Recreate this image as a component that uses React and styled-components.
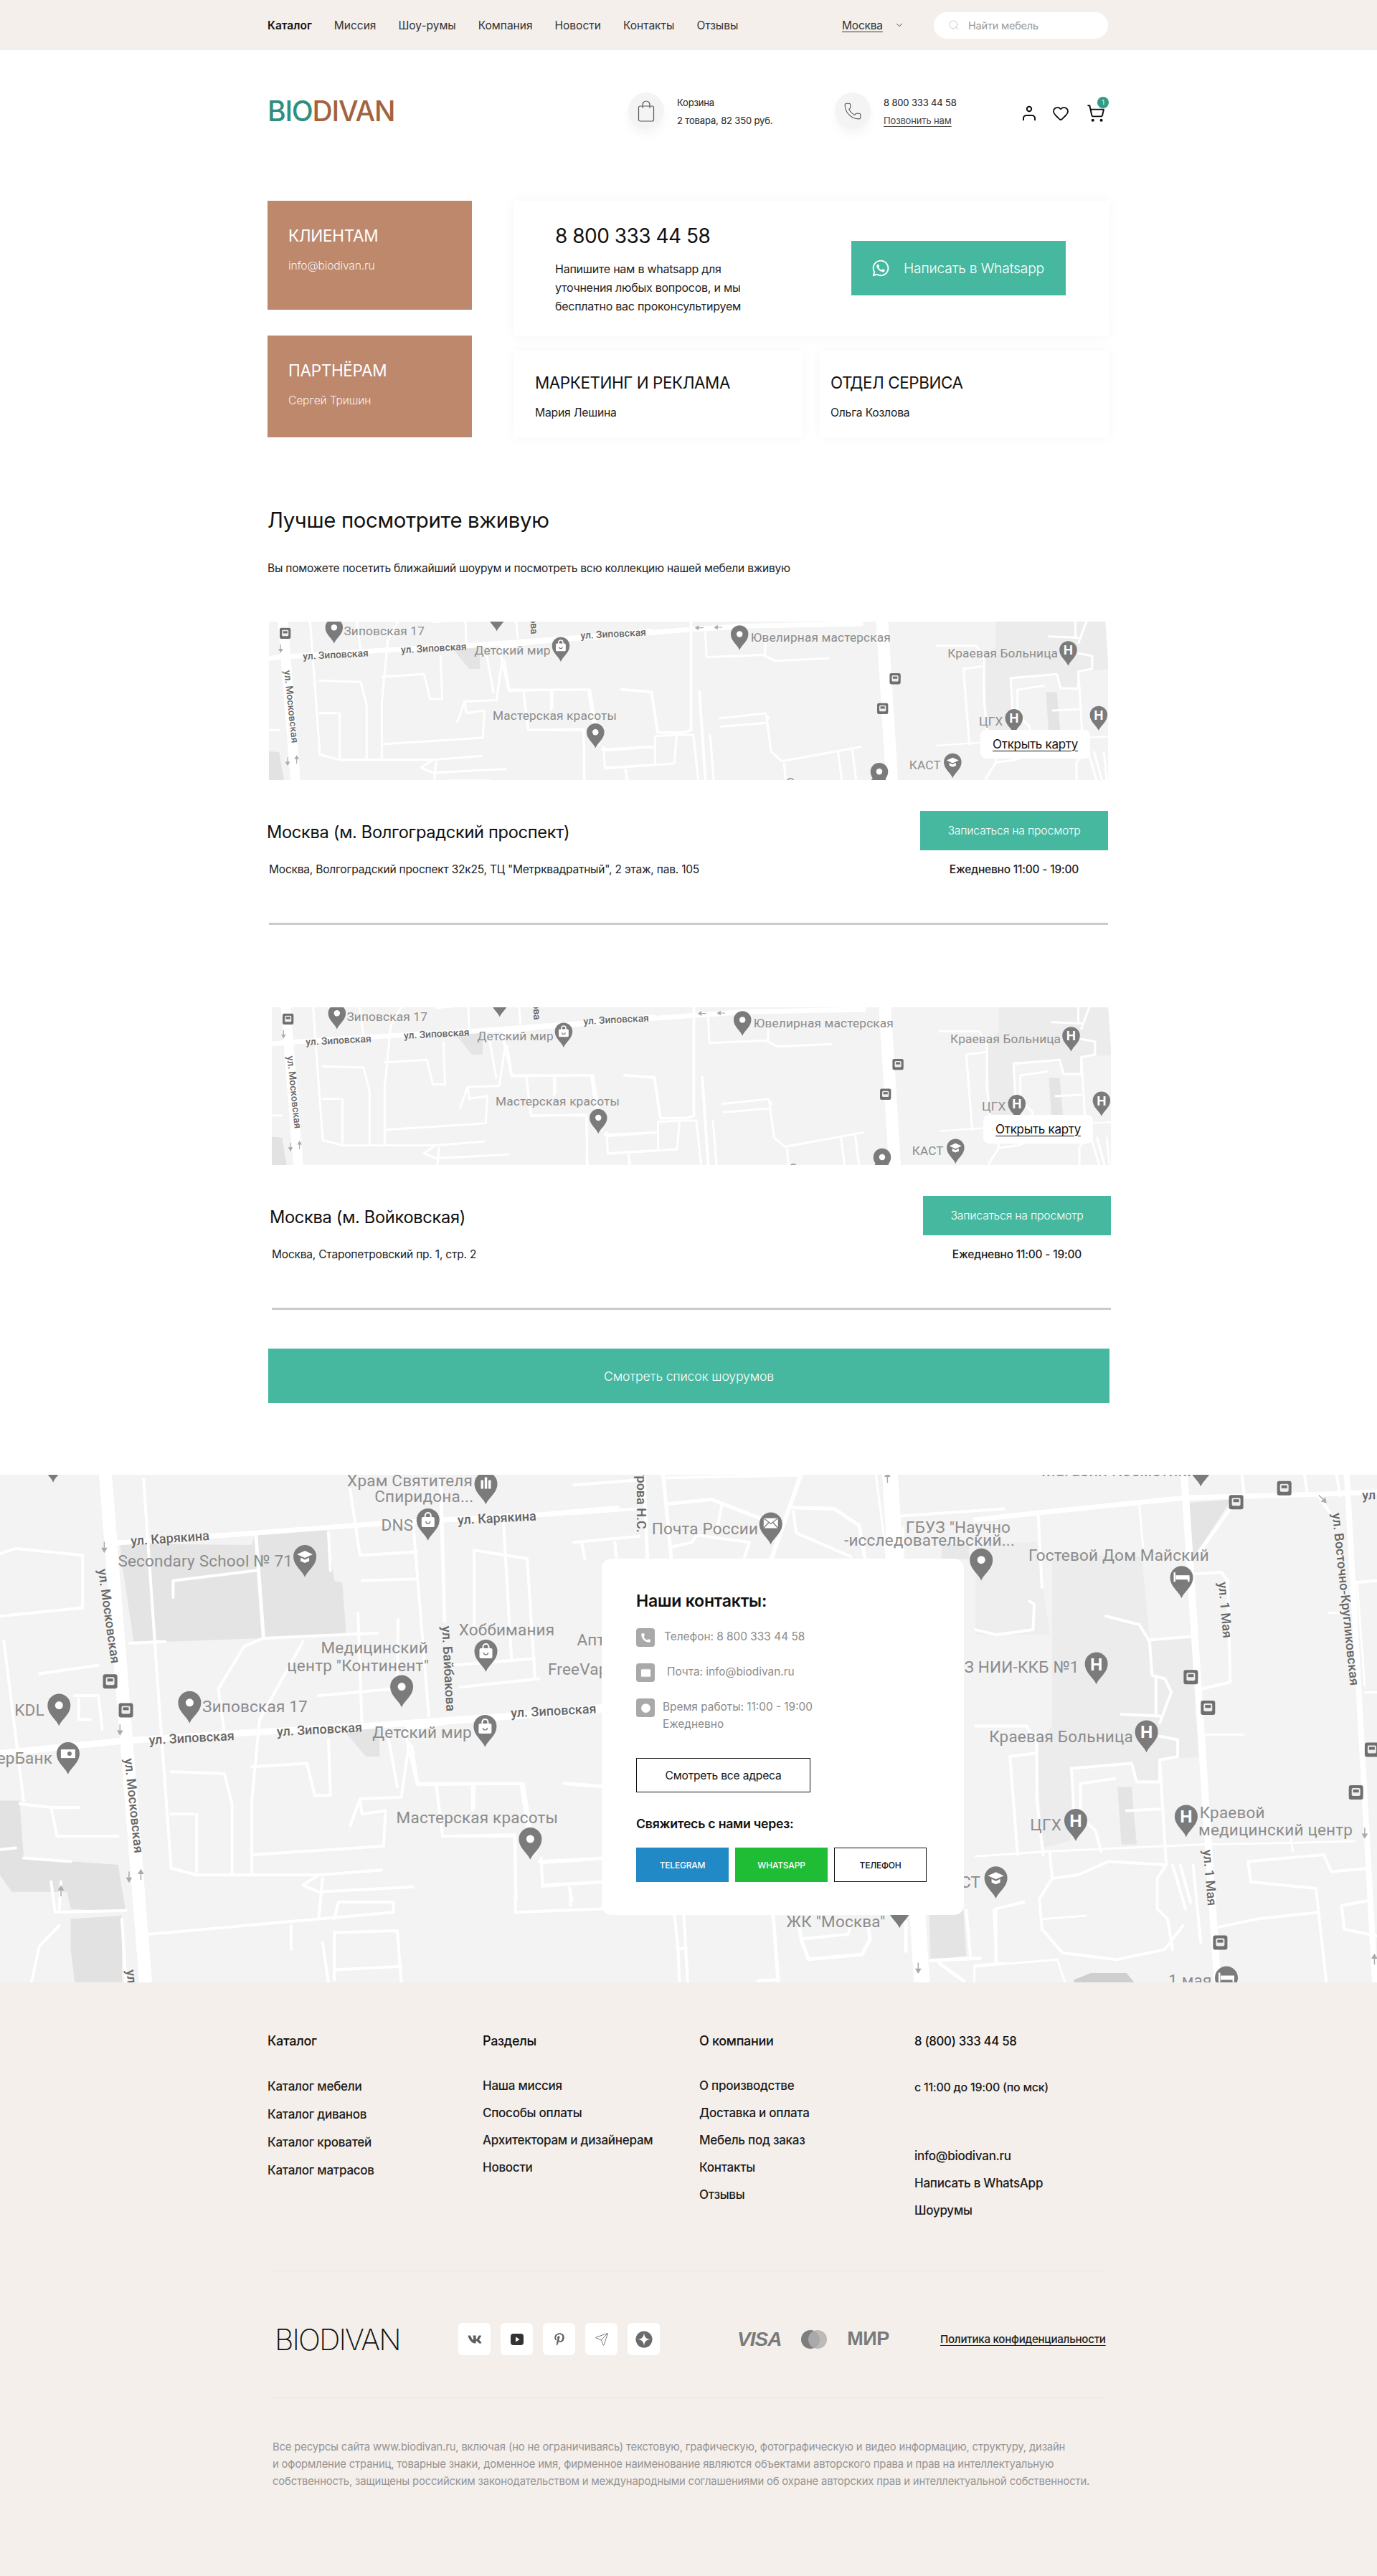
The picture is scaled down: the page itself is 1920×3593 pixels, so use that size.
import React from 'react';
import styled, { createGlobalStyle } from 'styled-components';
import { FaVk, FaWhatsapp, FaPinterestP } from 'react-icons/fa';
import { Search, ChevronDown, Heart, ShoppingCart, Phone, Mail, Clock, Send } from 'lucide-react';

/* ---------- map data: each helper turns measured coordinates into map space (1920x708) ---------- */
const A = (x, y) => [x / 1.823, y / 2.119 - 17.5];
const B = (x, y) => [1360 + x / 2.8, y / 2.119 - 17.5];
const C = (x, y) => [800 + x / 2.613, y / 3 - 2.5];
const D = (x, y) => [800 + x / 2.613, 607.5 + y / 3];
const E = (x, y) => [146 + (700 + x / 3 - 375) / 0.767, 307 + (865 + y / 3 - 867) / 0.767];
const F = (x, y) => [146 + (340 + x / 1.2645 - 375) / 0.767, 307 + (850 + y / 3 - 867) / 0.767];

const line = (fn, pts) => pts.map(([x, y]) => fn(x, y).map((v) => v.toFixed(1)).join(',')).join(' ');

const BLOCKS = [
  ['#e4e4e4', A, [[305,240],[640,245],[650,200],[830,200],[850,350],[870,355],[880,510],[670,520],[430,530],[340,530],[310,300]]],
  ['#e2e2e2', A, [[0,1000],[50,1000],[60,1170],[300,1190],[320,1330],[180,1320],[170,1270],[30,1270],[0,1220]]],
  ['#e2e2e2', A, [[180,1350],[310,1340],[310,1537],[190,1537],[180,1440]]],
  ['#e4e4e4', A, [[880,800],[965,780],[965,870],[930,870]]],
  ['#e4e4e4', B, [[835,120],[1000,110],[870,260],[850,300]]],
  ['#ececec', B, [[300,270],[650,280],[680,520],[850,520],[875,870],[730,880],[710,940],[630,940],[600,890],[380,900],[370,1120],[260,1140],[240,830],[300,780]]],
  ['#e4e4e4', B, [[555,960],[610,960],[630,1130],[570,1130]]],
  ['#eeeeee', B, [[0,240],[240,235],[290,510],[0,510]]],
  ['#cfcfcf', B, [[385,1530],[450,1510],[590,1510],[620,1537],[620,1560],[385,1560]]],
  ['#e4e4e4', D, [[1295,0],[1420,0],[1430,190],[1300,210]]],
  ['#e8e8e8', C, [[1340,300],[1440,300],[1440,360],[1340,360]]],
];

const ROADS = [
  [A, 18, [[268,37],[370,1537]]],
  [A, 9, [[0,860],[300,825],[620,800],[930,780],[1290,750],[1530,725]]],
  [E, 9, [[0,110],[130,90],[780,40],[1000,25],[1500,15]]],
  [A, 7, [[280,240],[640,210],[980,180],[1380,155],[1568,135]]],
  [A, 4, [[0,270],[40,255],[210,275],[210,430],[0,455]]],
  [A, 4, [[365,50],[400,640],[435,1200],[500,1220],[810,1220],[970,1205]]],
  [A, 4, [[440,400],[440,350],[650,320]]],
  [A, 5, [[650,210],[670,520]]],
  [A, 4, [[330,535],[420,530]]],
  [A, 4, [[670,520],[960,505]]],
  [A, 4, [[670,520],[620,545],[555,670],[570,800]]],
  [A, 4, [[770,530],[660,760],[640,1000],[640,1220]]],
  [A, 4, [[910,445],[920,780]]],
  [A, 4, [[1012,465],[1010,640]]],
  [A, 4, [[835,210],[840,320]]],
  [A, 4, [[890,80],[915,275],[1060,265]]],
  [A, 4, [[920,350],[1060,345]]],
  [A, 4, [[1050,180],[1090,750]]],
  [A, 5, [[1120,50],[1130,470]]],
  [A, 4, [[1205,490],[1205,260],[1340,285],[1360,640]]],
  [A, 4, [[1280,180],[1300,580]]],
  [A, 4, [[1170,665],[1370,640]]],
  [A, 4, [[1150,600],[1360,580]]],
  [A, 4, [[810,690],[1000,670]]],
  [A, 4, [[100,625],[250,600]]],
  [A, 4, [[10,530],[60,1000]]],
  [A, 4, [[190,690],[250,690],[260,790]]],
  [A, 4, [[200,700],[200,760],[230,760]]],
  [A, 4, [[50,1010],[130,1020],[145,1105],[300,1105]]],
  [A, 4, [[435,915],[570,920],[590,1010],[590,1220]]],
  [A, 4, [[500,1040],[500,1210]]],
  [A, 4, [[435,1040],[490,1040]]],
  [A, 4, [[640,900],[780,890],[800,985],[840,985],[835,820]]],
  [A, 4, [[640,1160],[975,1135],[980,1030],[920,1040],[915,995],[890,1075]]],
  [A, 4, [[915,995],[1020,990],[1040,830]]],
  [A, 4, [[985,800],[1010,960]]],
  [A, 4, [[1030,800],[1060,950],[1330,950],[1360,1160]]],
  [A, 4, [[1110,960],[1125,1105],[1310,1105],[1310,1330],[1530,1320]]],
  [A, 4, [[1205,960],[1205,1020]]],
  [A, 4, [[1370,1180],[1530,1170]]],
  [A, 4, [[1380,1250],[1530,1240]]],
  [A, 4, [[1450,1260],[1450,1310]]],
  [A, 4, [[810,1220],[770,1250],[810,1270],[1050,1255]]],
  [A, 4, [[820,1230],[810,1350]]],
  [A, 4, [[380,1395],[810,1350],[1000,1330],[1000,1300],[860,1300],[850,1350]]],
  [A, 4, [[740,1370],[740,1440]]],
  [A, 4, [[820,1420],[835,1537]]],
  [A, 4, [[850,1530],[850,1390],[1010,1385],[1020,1537]]],
  [A, 4, [[850,1500],[1020,1490]]],
  [A, 4, [[130,1240],[140,1330],[320,1325]]],
  [A, 4, [[155,1240],[150,1330]]],
  [A, 4, [[150,1370],[100,1430],[80,1537]]],
  [A, 4, [[310,1350],[320,1537]]],
  [A, 4, [[0,1145],[40,1140]]],
  [A, 4, [[130,1020],[200,1020]]],
  [A, 4, [[60,1170],[180,1180]]],
  [C, 22, [[1152,0],[1268,2130]]],
  [C, 6, [[830,0],[720,360]]],
  [C, 4, [[0,50],[230,30]]],
  [C, 4, [[0,170],[230,150]]],
  [C, 4, [[0,290],[240,265]]],
  [C, 4, [[30,295],[40,360]]],
  [C, 4, [[150,290],[155,355]]],
  [C, 5, [[255,0],[268,355]]],
  [C, 5, [[325,0],[355,355]]],
  [C, 4, [[340,20],[820,10]]],
  [C, 5, [[340,130],[500,110],[680,190]]],
  [C, 4, [[540,130],[520,250]]],
  [C, 4, [[355,310],[430,290],[450,260],[640,290],[620,360]]],
  [C, 5, [[800,145],[950,150],[1040,220],[1060,350]]],
  [C, 4, [[800,160],[810,250],[1010,350]]],
  [C, 3, [[1100,0],[1140,355]]],
  [C, 4, [[1190,180],[1568,150]]],
  [C, 3, [[1200,230],[1200,350]]],
  [D, 4, [[365,0],[380,155],[385,300]]],
  [D, 4, [[400,0],[415,300]]],
  [D, 4, [[375,160],[410,160]]],
  [D, 5, [[725,0],[745,300]]],
  [D, 4, [[670,295],[745,290]]],
  [D, 5, [[820,60],[830,125],[855,205],[1050,185],[1080,120],[1070,50]]],
  [D, 4, [[830,120],[1000,100],[1010,60]]],
  [D, 5, [[1210,50],[1210,170]]],
  [D, 5, [[1300,210],[1480,200]]],
  [D, 5, [[1330,220],[1420,295]]],
  [D, 4, [[1430,0],[1445,190]]],
  [D, 3, [[1460,300],[1460,230],[1568,220]]],
  [D, 3, [[1530,0],[1540,220]]],
  [E, 5, [[790,0],[790,460],[760,470],[650,470],[625,300],[500,290]]],
  [E, 4, [[10,170],[30,295],[360,290],[385,460]]],
  [E, 4, [[90,310],[110,460],[340,455]]],
  [E, 4, [[205,300],[205,375]]],
  [E, 4, [[340,460],[345,665]]],
  [E, 4, [[425,530],[430,620],[720,600],[730,480],[800,480],[820,665]]],
  [E, 4, [[430,545],[640,530]]],
  [E, 4, [[640,490],[640,600]]],
  [E, 4, [[640,485],[730,480]]],
  [E, 4, [[515,625],[525,665]]],
  [E, 5, [[825,300],[850,665]]],
  [E, 4, [[870,480],[885,665]]],
  [E, 4, [[850,50],[855,155],[1090,145],[1140,170],[1365,160]]],
  [E, 4, [[1100,60],[1100,145]]],
  [E, 4, [[910,410],[1100,390],[1115,410]]],
  [E, 4, [[915,445],[1100,430]]],
  [E, 4, [[1105,400],[1125,550],[1170,590],[1500,530]]],
  [E, 4, [[1180,600],[1185,665]]],
  [E, 4, [[1405,550],[1420,665]]],
  [E, 4, [[1465,545],[1480,665]]],
  [B, 7, [[0,170],[240,150],[820,105],[1340,95],[1568,88]]],
  [B, 10, [[815,37],[945,1537]]],
  [B, 8, [[1450,37],[1560,1537]]],
  [B, 4, [[245,150],[260,370]]],
  [B, 3, [[640,130],[655,250]]],
  [B, 4, [[1040,37],[1050,95]]],
  [B, 4, [[1285,37],[1295,90]]],
  [B, 5, [[1020,110],[870,270]]],
  [B, 4, [[855,330],[960,325],[985,350],[995,650],[880,670]]],
  [B, 4, [[1340,100],[1420,190]]],
  [B, 3, [[900,805],[1045,805]]],
  [B, 4, [[510,455],[640,480],[680,530],[690,630],[740,640],[765,680],[720,770]]],
  [B, 4, [[680,525],[850,515]]],
  [B, 4, [[705,640],[705,750]]],
  [B, 4, [[570,745],[720,750]]],
  [B, 4, [[210,410],[230,420],[225,495],[80,510],[0,495]]],
  [B, 4, [[0,780],[200,780],[240,830],[240,1000],[265,1160]]],
  [B, 4, [[135,870],[230,860]]],
  [B, 4, [[135,870],[165,1160]]],
  [B, 4, [[375,905],[610,890],[630,945],[720,945],[720,880],[790,870],[790,820],[720,810]]],
  [B, 4, [[375,905],[385,1030],[470,1090],[490,1150]]],
  [B, 4, [[410,1040],[410,950],[545,935]]],
  [B, 4, [[590,1030],[720,1025]]],
  [B, 4, [[720,880],[745,1190]]],
  [B, 3, [[0,1165],[290,1150],[880,1130],[1230,1125],[1480,1120]]],
  [B, 4, [[290,1150],[300,1230],[250,1290],[260,1380],[340,1450],[550,1470],[740,1440],[810,1370]]],
  [B, 4, [[300,1230],[400,1220],[520,1180],[745,1190]]],
  [B, 4, [[745,1190],[710,1230],[710,1320],[750,1350],[770,1440]]],
  [B, 4, [[770,1190],[820,1320]]],
  [B, 4, [[800,1190],[840,1300]]],
  [B, 4, [[850,1190],[880,1420]]],
  [B, 3, [[265,1350],[430,1340]]],
  [B, 4, [[80,1480],[80,1320],[190,1300]]],
  [B, 3, [[0,1490],[320,1470],[350,1537]]],
  [B, 4, [[945,1375],[1100,1350],[1340,1330],[1370,1537]]],
  [B, 4, [[1065,1180],[1360,1160],[1390,1210],[1540,1200]]],
  [B, 4, [[1065,1180],[1075,1240],[1330,1260],[1340,1330]]],
  [B, 3, [[1230,1110],[1240,1150]]],
  [B, 4, [[1430,1310],[1540,1295]]],
  [B, 4, [[1430,1310],[1440,1380],[1568,1400]]],
  [B, 3, [[1380,445],[1440,445]]],
  [B, 4, [[1490,355],[1568,350]]],
  [B, 3, [[1490,355],[1520,660]]],
  [B, 3, [[1520,680],[1568,680]]],
  [B, 4, [[1410,37],[1425,100]]],
];

const PINS = [
  ['worship', A(1235, 125)], ['shop', A(1088, 232)], ['school', A(775, 340)], ['shop', A(1235, 620)],
  ['dot', A(1021, 725)], ['dot', A(482, 772)], ['dot', A(150, 780)], ['bank', A(173, 923)],
  ['shop', A(1233, 842)], ['dot', A(1348, 1175)], ['dot', A(135, 60)],
  ['mail', C(718, 300)], ['dot', D(1187, 75)], ['dot', B(23, 350)], ['bed', B(805, 402)],
  ['h', B(472, 657)], ['h', B(668, 858)], ['h', B(392, 1120)], ['h', B(823, 1108)],
  ['school', B(80, 1290)], ['bed', B(980, 1585)], ['dot', B(880, 72)], ['dot', E(993, 125)],
  ['dot', F(1120, 745)],
];

const BUSES = [
  A(280, 648), A(320, 733), B(1018, 118), B(1206, 77), B(841, 635), B(908, 726),
  B(1548, 850), B(1486, 976), B(956, 1420), F(1148, 290), F(1126, 415),
];

const ARROWS = [
  [A(265, 250), 180], [A(305, 790), 180], [A(328, 1225), 180], [A(358, 1220), 0],
  [A(155, 1268), 0], [B(1520, 1095), 180], [B(1558, 1470), 0], [B(1355, 108), 135],
  [D(1255, 240), 180], [C(1143, 20), 0], [E(825, 32), 270], [E(905, 30), 270],
];

const LABELS = [
  ['Храм Святителя', A(1042, 53)], ['Спиридона...', A(1078, 100)], ['DNS', A(1010, 185)],
  ['Secondary School № 71', A(522, 292)], ['Хоббимания', A(1288, 495)], ['Медицинский', A(952, 548)],
  ['центр "Континент"', A(910, 600)], ['Аптека', A(1535, 525)], ['FreeVape', A(1480, 612)],
  ['KDL', A(75, 733)], ['Зиповская 17', A(648, 722)], ['Детский мир', A(1073, 797)],
  ['СберБанк', A(133, 875), 0, 'end'], ['Мастерская красоты', A(1213, 1050)],
  ['Гостевой Дом Майский', B(560, 275)], ['ГБУЗ "Научно', C(1210, 225), 0, 'start'],
  ['-исследовательский...', C(985, 280), 0, 'start'], ['ГБУЗ НИИ-ККБ №1', B(405, 605), 0, 'end'],
  ['Краевая Больница', B(335, 810)], ['ЦГХ', B(275, 1070)], ['Краевой', B(1003, 1035)],
  ['медицинский центр', B(1172, 1085)], ['КАСТ', B(20, 1240), 0, 'end'], ['1 мая', B(838, 1530)],
  ['Почта России', C(478, 232)], ['ЖК "Москва"', D(955, 45)], ['Ювелирная мастерская', E(1040, 72), 0, 'start'],
  ['Магазин Косметики', B(560, 25)], ['Отдел продаж', F(1030, 722)],
];

const ROAD_LABELS = [
  ['ул. Карякина', A(432, 225), -4], ['ул. Карякина', A(1263, 165), -3],
  ['ул. Московская', A(277, 455), 82], ['ул. Московская', A(340, 1015), 84],
  ['ул. Московская', A(332, 1500), 84, 'start'], ['ул. Байбакова', A(1140, 610), 87],
  ['ул. Зиповская', A(487, 815), -3], ['ул. Зиповская', A(812, 790), -3], ['ул. Зиповская', A(1407, 735), -3],
  ['ул. 1 Мая', B(975, 437), 85], ['ул. 1 Мая', B(915, 1228), 85],
  ['ул. Восточно-Кругликовская', B(1445, 405), 84], ['ул', B(1510, 98), -2, 'start'],
  ['ул. Петрова Н.С.', C(245, 250), 90, 'end'],
];

/* ---------- map parts ---------- */
const MapSvg = styled.svg`
  display: block;
  width: 100%;
  height: 100%;
  background: #f3f3f3;
`;
const PlaceText = styled.text`
  font-family: Roboto, 'Liberation Sans', sans-serif;
  font-size: 22.5px;
  letter-spacing: 0.2px;
  fill: #8c8c8c;
`;
const StreetText = styled.text`
  font-family: Roboto, 'Liberation Sans', sans-serif;
  font-size: 18px;
  font-weight: 500;
  fill: #666;
`;
const PinGlyph = styled.text`
  font-family: 'Liberation Sans', sans-serif;
  font-size: 24px;
  font-weight: 700;
  fill: #fff;
  text-anchor: middle;
`;

function Glyph({ kind }) {
  if (kind === 'dot') return <circle cx="0" cy="-29" r="5.5" fill="#fff" />;
  if (kind === 'h') return <PinGlyph x="0" y="-20">H</PinGlyph>;
  if (kind === 'shop')
    return (
      <g fill="none" stroke="#fff" strokeWidth="2">
        <rect x="-8" y="-32" width="16" height="12" rx="1" fill="#fff" />
        <path d="M-4 -32v-3a4 4 0 0 1 8 0v3" />
        <path d="M-3 -27a3 3 0 0 0 6 0" stroke="#7b7b7b" strokeWidth="1.4" />
      </g>
    );
  if (kind === 'school')
    return (
      <g fill="#fff">
        <path d="M-11 -32L0 -37L11 -32L0 -27Z" />
        <path d="M-6 -27.5L0 -24.5L6 -27.5V-22.5L0 -20L-6 -22.5Z" />
      </g>
    );
  if (kind === 'mail')
    return (
      <g>
        <rect x="-10" y="-37" width="20" height="14" fill="#fff" />
        <path d="M-10 -37L0 -29L10 -37M-10 -23L-3 -31M10 -23L3 -31" fill="none" stroke="#7b7b7b" strokeWidth="1.3" />
      </g>
    );
  if (kind === 'bed')
    return (
      <g fill="#fff">
        <rect x="-11" y="-36" width="2.5" height="13" />
        <rect x="-8" y="-32" width="19" height="6" />
        <rect x="8.5" y="-29" width="2.5" height="6" />
      </g>
    );
  if (kind === 'bank')
    return (
      <g>
        <rect x="-10" y="-35" width="20" height="12" fill="#fff" />
        <circle cx="2" cy="-29" r="3" fill="#7b7b7b" />
      </g>
    );
  return (
    <g fill="#fff">
      <rect x="-7" y="-34" width="3.5" height="12" />
      <rect x="-1.7" y="-38" width="3.5" height="16" />
      <rect x="3.5" y="-34" width="3.5" height="12" />
    </g>
  );
}

function Pin({ kind, at }) {
  return (
    <g transform={`translate(${at[0].toFixed(1)} ${at[1].toFixed(1)})`}>
      <path d="M0 0C-3 -9 -16 -16 -16 -29A16 16 0 1 1 16 -29C16 -16 3 -9 0 0Z" fill="#7b7b7b" />
      <Glyph kind={kind} />
    </g>
  );
}

function Bus({ at }) {
  return (
    <g transform={`translate(${at[0].toFixed(1)} ${at[1].toFixed(1)})`}>
      <rect x="-10" y="-10" width="20" height="20" rx="3" fill="#6f6f6f" />
      <rect x="-6" y="-6" width="12" height="11" rx="2" fill="#eee" />
      <rect x="-4" y="-4" width="8" height="4" fill="#6f6f6f" />
    </g>
  );
}

function MapArt({ viewBox }) {
  return (
    <MapSvg viewBox={viewBox} preserveAspectRatio="none" aria-hidden="true">
      {BLOCKS.map(([fill, fn, pts], i) => (
        <polygon key={i} points={line(fn, pts)} fill={fill} />
      ))}
      {ROADS.map(([fn, w, pts], i) => (
        <polyline key={i} points={line(fn, pts)} fill="none" stroke="#fff" strokeWidth={w} strokeLinecap="round" strokeLinejoin="round" />
      ))}
      {ARROWS.map(([at, r], i) => (
        <path key={i} transform={`translate(${at[0].toFixed(1)} ${at[1].toFixed(1)}) rotate(${r})`} d="M0 7V-4M-3 -2L0 -7L3 -2Z" stroke="#aaa" strokeWidth="1.5" fill="#aaa" />
      ))}
      {LABELS.map(([t, at, r, anchor], i) => (
        <PlaceText key={i} x={at[0].toFixed(1)} y={(at[1] + 8).toFixed(1)} textAnchor={anchor || 'middle'}>{t}</PlaceText>
      ))}
      {ROAD_LABELS.map(([t, at, r, anchor], i) => (
        <StreetText key={i} transform={`translate(${at[0].toFixed(1)} ${at[1].toFixed(1)}) rotate(${r})`} y="6" textAnchor={anchor || 'middle'}>{t}</StreetText>
      ))}
      {BUSES.map((at, i) => <Bus key={i} at={at} />)}
      {PINS.map(([k, at], i) => <Pin key={i} kind={k} at={at} />)}
    </MapSvg>
  );
}

/* ---------- page ---------- */
const Global = createGlobalStyle`
  html, body { margin: 0; padding: 0; background: #fff; }
  body { font-family: Inter, 'Noto Sans', sans-serif; color: #111; }
  * { box-sizing: border-box; }
  a { color: inherit; }
`;

const TopBar = styled.div`
  height: 70px;
  background: #f4efeb;
`;
const Wrap = styled.div`
  width: 1174px;
  margin: 0 auto;
`;
const TopInner = styled(Wrap)`
  height: 70px;
  display: flex;
  align-items: center;
`;
const Nav = styled.nav`
  display: flex;
  gap: 31px;
  width: 801px;
`;
const NavItem = styled.a`
  font-size: 15.5px;
  font-weight: ${(p) => (p.$active ? 600 : 400)};
  color: ${(p) => (p.$active ? '#111' : '#333')};
`;
const City = styled.div`
  display: flex;
  align-items: center;
  gap: 16px;
  width: 128px;
  font-size: 15.5px;
  letter-spacing: -0.2px;
  color: #333;
  span { text-decoration: underline; text-underline-offset: 3px; text-decoration-thickness: 1px; }
`;
const SearchBox = styled.div`
  width: 243px;
  height: 37px;
  border-radius: 19px;
  background: #fff;
  display: flex;
  align-items: center;
  gap: 12px;
  padding-left: 20px;
  font-size: 14.5px;
  letter-spacing: -0.2px;
  color: #9a9a9a;
`;

const Head = styled(Wrap)`
  height: 210px;
  padding-top: 59px;
  display: flex;
  align-items: flex-start;
`;
const Logo = styled.div`
  width: 503px;
  height: 51px;
  display: flex;
  align-items: center;
  font-size: 39px;
  font-weight: 500;
  letter-spacing: -1.2px;
  color: #a2633f;
  b { font-weight: 500; color: #2f8f7e; }
`;
const HeadBlock = styled.div`
  width: ${(p) => p.$w}px;
  display: flex;
  gap: 18px;
`;
const Bubble = styled.div`
  width: 50px;
  height: 51px;
  border-radius: 50%;
  background: #f4f4f4;
  box-shadow: 0 8px 14px rgba(0, 0, 0, 0.04);
  display: flex;
  align-items: center;
  justify-content: center;
  color: #555;
`;
const HeadText = styled.div`
  font-size: 13px;
  letter-spacing: -0.15px;
  line-height: 25px;
  padding-top: 2px;
  color: #222;
  a { text-decoration: underline; text-underline-offset: 3px; color: #444; }
`;
const HeadIcons = styled.div`
  display: flex;
  align-items: center;
  gap: 22px;
  padding: 7px 0 0 2px;
  height: 51px;
`;
const CartWrap = styled.div`
  position: relative;
  margin-left: 2px;
  display: flex;
`;
const Badge = styled.span`
  position: absolute;
  right: -5px;
  top: -10px;
  width: 16px;
  height: 16px;
  border-radius: 50%;
  background: #2f9c88;
  color: #fff;
  font-size: 9px;
  line-height: 16px;
  text-align: center;
`;

const ContactGrid = styled(Wrap)`
  display: grid;
  grid-template-columns: 285px 830px;
  column-gap: 58px;
  align-items: start;
`;
const LeftCol = styled.div`
  display: flex;
  flex-direction: column;
  gap: 36px;
`;
const BrownCard = styled.div`
  height: ${(p) => p.$h}px;
  background: #bd886c;
  color: #fff;
  padding: 34px 29px;
`;
const BrownTitle = styled.div`
  font-size: 22.5px;
  line-height: 30px;
  font-weight: 400;
  letter-spacing: -0.3px;
`;
const BrownSub = styled.div`
  margin-top: 15px;
  font-size: 15.7px;
  line-height: 24px;
  font-weight: 300;
  letter-spacing: -0.2px;
  color: rgba(255, 255, 255, 0.9);
`;
const RightCol = styled.div`
  display: flex;
  flex-direction: column;
  gap: 20px;
`;
const WaCard = styled.div`
  height: 189px;
  background: #fff;
  box-shadow: 0 0 18px rgba(0, 0, 0, 0.045);
  display: flex;
  padding-left: 58px;
`;
const WaInfo = styled.div`
  width: 413px;
  padding-top: 30px;
`;
const BigPhone = styled.div`
  font-size: 28px;
  line-height: 38px;
  font-weight: 400;
  letter-spacing: -0.5px;
`;
const WaText = styled.p`
  margin: 14px 0 0;
  font-size: 16px;
  line-height: 26px;
  letter-spacing: -0.25px;
  color: #222;
`;
const WaButton = styled.a`
  width: 299px;
  height: 76px;
  margin-top: 56px;
  background: #46b8a0;
  color: #fff;
  display: flex;
  align-items: center;
  gap: 19px;
  padding-left: 28px;
  font-size: 19.3px;
  font-weight: 300;
  letter-spacing: -0.2px;
`;
const DeptRow = styled.div`
  display: grid;
  grid-template-columns: 403px 403px;
  column-gap: 24px;
`;
const DeptCard = styled.div`
  height: 121px;
  background: #fff;
  box-shadow: 0 0 16px rgba(0, 0, 0, 0.04);
  padding: 30px 0 0 ${(p) => p.$pad}px;
`;
const DeptTitle = styled.div`
  font-size: 22.4px;
  line-height: 30px;
  letter-spacing: -0.4px;
`;
const DeptSub = styled.div`
  margin-top: 15px;
  font-size: 15.7px;
  line-height: 24px;
  letter-spacing: -0.2px;
  color: #222;
`;

const Heading = styled.h2`
  margin: 96px 0 0;
  font-size: 29.3px;
  line-height: 40px;
  font-weight: 400;
  letter-spacing: -0.3px;
`;
const Lead = styled.p`
  margin: 35px 0 62px;
  font-size: 15.5px;
  line-height: 24px;
  letter-spacing: -0.2px;
  color: #222;
`;

const Showroom = styled.section`
  width: 1170px;
  margin-left: ${(p) => p.$shift}px;
  margin-bottom: ${(p) => p.$after}px;
`;
const MapFrame = styled.div`
  position: relative;
  height: ${(p) => p.$h}px;
  overflow: hidden;
`;
const OpenMap = styled.a`
  position: absolute;
  right: 25px;
  bottom: 30px;
  width: 153px;
  height: 40px;
  border-radius: 8px;
  background: #fff;
  display: flex;
  align-items: center;
  justify-content: center;
  font-size: 17px;
  letter-spacing: -0.3px;
  text-decoration: underline;
  text-underline-offset: 3px;
  color: #111;
`;
const RoomTop = styled.div`
  margin-top: 43px;
  display: flex;
  align-items: center;
  justify-content: space-between;
`;
const RoomTitle = styled.h3`
  margin: 5px 0 0 -3px;
  font-size: 23.6px;
  line-height: 32px;
  font-weight: 400;
  letter-spacing: -0.3px;
`;
const BookButton = styled.a`
  width: 262px;
  height: 55px;
  background: #46b8a0;
  color: #fff;
  display: flex;
  align-items: center;
  justify-content: center;
  font-size: 15.8px;
  font-weight: 300;
  letter-spacing: -0.2px;
`;
const RoomBottom = styled.div`
  margin: 15px 0 62px;
  display: flex;
  justify-content: space-between;
  font-size: 15.5px;
  line-height: 24px;
  letter-spacing: -0.2px;
  color: #222;
`;
const Hours = styled.span`
  width: 262px;
  text-align: center;
  font-weight: 500;
`;
const Rule = styled.hr`
  margin: 0;
  border: 0;
  height: 3px;
  background: #cbcbcb;
`;
const ListButton = styled.a`
  display: flex;
  align-items: center;
  justify-content: center;
  width: 1173px;
  height: 76px;
  margin: 0 0 100px 1px;
  background: #46b8a0;
  color: #fff;
  font-size: 17.7px;
  font-weight: 300;
  letter-spacing: -0.2px;
`;

const BigMap = styled.section`
  position: relative;
  height: 708px;
  overflow: hidden;
`;
const InfoCard = styled.div`
  position: absolute;
  left: 839px;
  top: 117px;
  width: 505px;
  height: 497px;
  background: #fff;
  border-radius: 14px;
  padding: 44px 48px 0;
`;
const InfoTitle = styled.div`
  font-size: 23px;
  line-height: 30px;
  font-weight: 600;
  letter-spacing: -0.2px;
  color: #111;
`;
const InfoRows = styled.div`
  margin-top: 23px;
  display: flex;
  flex-direction: column;
  gap: 23px;
`;
const InfoRow = styled.div`
  display: flex;
  gap: ${(p) => p.$gap}px;
  font-size: 15.4px;
  line-height: 24px;
  color: #8b8b8b;
`;
const InfoIcon = styled.span`
  flex: none;
  width: 26px;
  height: 26px;
  border-radius: 4px;
  background: #a9a9a9;
  color: #fff;
  display: flex;
  align-items: center;
  justify-content: center;
`;
const AllAddresses = styled.a`
  display: flex;
  align-items: center;
  justify-content: center;
  width: 243px;
  height: 48px;
  margin-top: 35px;
  border: 1px solid #111;
  font-size: 15.6px;
  letter-spacing: -0.2px;
  color: #111;
`;
const Reach = styled.div`
  margin-top: 32px;
  font-size: 17.7px;
  line-height: 24px;
  font-weight: 600;
  letter-spacing: -0.25px;
`;
const ReachRow = styled.div`
  margin-top: 21px;
  display: flex;
  gap: 9px;
`;
const ReachBtn = styled.a`
  width: 129px;
  height: 48px;
  display: flex;
  align-items: center;
  justify-content: center;
  font-size: 12px;
  font-weight: 500;
  letter-spacing: -0.2px;
  background: ${(p) => p.$bg};
  color: ${(p) => p.$fg};
  border: ${(p) => (p.$line ? '1px solid #111' : '0')};
`;

const Footer = styled.footer`
  background: #f4efeb;
  padding: 70px 0 120px;
`;
const FootCols = styled(Wrap)`
  display: grid;
  grid-template-columns: 300px 302px 300px 272px;
`;
const FootCol = styled.div`
  display: flex;
  flex-direction: column;
  gap: ${(p) => p.$gap}px;
`;
const FootTitle = styled.div`
  margin-bottom: ${(p) => p.$mb - 14}px;
  font-size: ${(p) => p.$size || 18}px;
  line-height: 24px;
  font-weight: 500;
  letter-spacing: -0.3px;
`;
const FootLink = styled.a`
  font-size: ${(p) => p.$size || 17}px;
  line-height: 24px;
  font-weight: 500;
  letter-spacing: -0.25px;
  color: #1b1b1b;
  margin-top: ${(p) => p.$mt || 0}px;
`;
const FootRule = styled.div`
  width: 1165px;
  height: 1px;
  margin: ${(p) => p.$mt}px auto 0;
  background: #ece7e2;
`;
const FootBottom = styled(Wrap)`
  margin-top: 72px;
  height: 45px;
  display: flex;
  align-items: center;
`;
const FootLogo = styled.div`
  width: 266px;
  padding-left: 10px;
  font-size: 41px;
  font-weight: 200;
  letter-spacing: -1.9px;
  color: #111;
`;
const Socials = styled.div`
  width: 389px;
  display: flex;
  gap: 14px;
`;
const Tile = styled.span`
  width: 45px;
  height: 45px;
  border-radius: 6px;
  background: #fff;
  display: flex;
  align-items: center;
  justify-content: center;
  color: #5e5e5e;
`;
const Pay = styled.div`
  width: 283px;
  display: flex;
  align-items: center;
  gap: 28px;
`;
const PayWord = styled.span`
  font-family: 'Liberation Sans', sans-serif;
  font-size: ${(p) => p.$size}px;
  font-weight: 700;
  font-style: ${(p) => (p.$italic ? 'italic' : 'normal')};
  letter-spacing: ${(p) => p.$ls}px;
  color: #7a7a7a;
`;
const Policy = styled.a`
  font-size: 15.1px;
  font-weight: 500;
  letter-spacing: -0.25px;
  text-decoration: underline;
  text-underline-offset: 3px;
  color: #222;
`;
const Legal = styled.div`
  width: 1174px;
  margin: 56px auto 0;
  padding-left: 7px;
  font-size: 14.8px;
  line-height: 24px;
  letter-spacing: -0.15px;
  color: #949494;
  span { display: block; white-space: nowrap; }
`;

export default function App() {
  return (
    <>
      <Global />
      <TopBar>
        <TopInner>
          <Nav>
            <NavItem $active>Каталог</NavItem>
            <NavItem>Миссия</NavItem>
            <NavItem>Шоу-румы</NavItem>
            <NavItem>Компания</NavItem>
            <NavItem>Новости</NavItem>
            <NavItem>Контакты</NavItem>
            <NavItem>Отзывы</NavItem>
          </Nav>
          <City><span>Москва</span><ChevronDown size={14} strokeWidth={1.5} /></City>
          <SearchBox><Search size={16} strokeWidth={1.2} color="#bbb" />Найти мебель</SearchBox>
        </TopInner>
      </TopBar>

      <Head>
        <Logo><b>BIO</b>DIVAN</Logo>
        <HeadBlock $w={288}>
          <Bubble>
            <svg width="24" height="30" viewBox="0 0 24 30" fill="none" stroke="#555" strokeWidth="1.2">
              <rect x="1.5" y="8" width="21" height="21" rx="2" />
              <path d="M7 11V6a5 5 0 0 1 10 0v5" />
            </svg>
          </Bubble>
          <HeadText>Корзина<br />2 товара, 82 350 руб.</HeadText>
        </HeadBlock>
        <HeadBlock $w={259}>
          <Bubble><Phone size={26} strokeWidth={1} /></Bubble>
          <HeadText>8 800 333 44 58<br /><a>Позвонить нам</a></HeadText>
        </HeadBlock>
        <HeadIcons>
          <svg width="20" height="22" viewBox="0 0 20 22" fill="none" stroke="#111" strokeWidth="2">
            <circle cx="10" cy="5" r="3.2" />
            <path d="M2 21v-3a4 4 0 0 1 4-4h8a4 4 0 0 1 4 4v3" />
          </svg>
          <Heart size={24} strokeWidth={1.8} color="#111" />
          <CartWrap>
            <ShoppingCart size={26} strokeWidth={1.8} color="#111" />
            <Badge>1</Badge>
          </CartWrap>
        </HeadIcons>
      </Head>

      <ContactGrid>
        <LeftCol>
          <BrownCard $h={152}>
            <BrownTitle>КЛИЕНТАМ</BrownTitle>
            <BrownSub>info@biodivan.ru</BrownSub>
          </BrownCard>
          <BrownCard $h={142}>
            <BrownTitle>ПАРТНЁРАМ</BrownTitle>
            <BrownSub>Сергей Тришин</BrownSub>
          </BrownCard>
        </LeftCol>
        <RightCol>
          <WaCard>
            <WaInfo>
              <BigPhone>8 800 333 44 58</BigPhone>
              <WaText>Напишите нам в whatsapp для<br />уточнения любых вопросов, и мы<br />бесплатно вас проконсультируем</WaText>
            </WaInfo>
            <WaButton><FaWhatsapp size={26} />Написать в Whatsapp</WaButton>
          </WaCard>
          <DeptRow>
            <DeptCard $pad={30}>
              <DeptTitle>МАРКЕТИНГ И РЕКЛАМА</DeptTitle>
              <DeptSub>Мария Лешина</DeptSub>
            </DeptCard>
            <DeptCard $pad={15}>
              <DeptTitle>ОТДЕЛ СЕРВИСА</DeptTitle>
              <DeptSub>Ольга Козлова</DeptSub>
            </DeptCard>
          </DeptRow>
        </RightCol>
      </ContactGrid>

      <Wrap>
        <Heading>Лучше посмотрите вживую</Heading>
        <Lead>Вы поможете посетить ближайший шоурум и посмотреть всю коллекцию нашей мебели вживую</Lead>

        <Showroom $shift={2} $after={115}>
          <MapFrame $h={221}>
            <MapArt viewBox="146 307 1525 288" />
            <OpenMap>Открыть карту</OpenMap>
          </MapFrame>
          <RoomTop>
            <RoomTitle>Москва (м. Волгоградский проспект)</RoomTitle>
            <BookButton>Записаться на просмотр</BookButton>
          </RoomTop>
          <RoomBottom>
            <span>Москва, Волгоградский проспект 32к25, ТЦ "Метрквадратный", 2 этаж, пав. 105</span>
            <Hours>Ежедневно 11:00 - 19:00</Hours>
          </RoomBottom>
          <Rule />
        </Showroom>

        <Showroom $shift={6} $after={54}>
          <MapFrame $h={220}>
            <MapArt viewBox="146 307 1525 287" />
            <OpenMap>Открыть карту</OpenMap>
          </MapFrame>
          <RoomTop>
            <RoomTitle>Москва (м. Войковская)</RoomTitle>
            <BookButton>Записаться на просмотр</BookButton>
          </RoomTop>
          <RoomBottom>
            <span>Москва, Старопетровский пр. 1, стр. 2</span>
            <Hours>Ежедневно 11:00 - 19:00</Hours>
          </RoomBottom>
          <Rule />
        </Showroom>

        <ListButton>Смотреть список шоурумов</ListButton>
      </Wrap>

      <BigMap>
        <MapArt viewBox="0 0 1920 708" />
        <InfoCard>
          <InfoTitle>Наши контакты:</InfoTitle>
          <InfoRows>
            <InfoRow $gap={13}>
              <InfoIcon><Phone size={15} fill="#fff" strokeWidth={0} /></InfoIcon>
              <span>Телефон: 8 800 333 44 58</span>
            </InfoRow>
            <InfoRow $gap={17}>
              <InfoIcon><Mail size={17} fill="#fff" stroke="#a9a9a9" strokeWidth={1.4} /></InfoIcon>
              <span>Почта: info@biodivan.ru</span>
            </InfoRow>
            <InfoRow $gap={11}>
              <InfoIcon><Clock size={17} fill="#fff" stroke="#a9a9a9" strokeWidth={2} /></InfoIcon>
              <span>Время работы: 11:00 - 19:00<br />Ежедневно</span>
            </InfoRow>
          </InfoRows>
          <AllAddresses>Смотреть все адреса</AllAddresses>
          <Reach>Свяжитесь с нами через:</Reach>
          <ReachRow>
            <ReachBtn $bg="#2089c6" $fg="#fff">TELEGRAM</ReachBtn>
            <ReachBtn $bg="#1fbc35" $fg="#fff">WHATSAPP</ReachBtn>
            <ReachBtn $bg="#fff" $fg="#111" $line>ТЕЛЕФОН</ReachBtn>
          </ReachRow>
        </InfoCard>
      </BigMap>

      <Footer>
        <FootCols>
          <FootCol $gap={15}>
            <FootTitle $mb={38}>Каталог</FootTitle>
            <FootLink>Каталог мебели</FootLink>
            <FootLink>Каталог диванов</FootLink>
            <FootLink>Каталог кроватей</FootLink>
            <FootLink>Каталог матрасов</FootLink>
          </FootCol>
          <FootCol $gap={14}>
            <FootTitle $mb={38}>Разделы</FootTitle>
            <FootLink>Наша миссия</FootLink>
            <FootLink>Способы оплаты</FootLink>
            <FootLink>Архитекторам и дизайнерам</FootLink>
            <FootLink>Новости</FootLink>
          </FootCol>
          <FootCol $gap={14}>
            <FootTitle $mb={38}>О компании</FootTitle>
            <FootLink>О производстве</FootLink>
            <FootLink>Доставка и оплата</FootLink>
            <FootLink>Мебель под заказ</FootLink>
            <FootLink>Контакты</FootLink>
            <FootLink>Отзывы</FootLink>
          </FootCol>
          <FootCol $gap={14}>
            <FootTitle $mb={40} $size={16.8}>8 (800) 333 44 58</FootTitle>
            <FootLink $size={16}>с 11:00 до 19:00 (по мск)</FootLink>
            <FootLink $mt={58}>info@biodivan.ru</FootLink>
            <FootLink>Написать в WhatsApp</FootLink>
            <FootLink>Шоурумы</FootLink>
          </FootCol>
        </FootCols>
        <FootRule $mt={72} />
        <FootBottom>
          <FootLogo>BIODIVAN</FootLogo>
          <Socials>
            <Tile><FaVk size={20} /></Tile>
            <Tile>
              <svg width="20" height="20" viewBox="0 0 20 20"><rect x="1" y="2" width="18" height="16" rx="4" fill="#333" /><path d="M8 6.5v7l5.5-3.5z" fill="#fff" /></svg>
            </Tile>
            <Tile><FaPinterestP size={18} /></Tile>
            <Tile><Send size={20} strokeWidth={1} /></Tile>
            <Tile>
              <svg width="24" height="24" viewBox="0 0 24 24"><circle cx="12" cy="12" r="11.5" fill="#6b6b6b" /><path d="M12 3c.6 6 2.9 8.400 9 9-6.100.6-8.400 3-9 9-.6-6-2.900-8.400-9-9 6.100-.6 8.400-3 9-9z" fill="#fff" /></svg>
            </Tile>
          </Socials>
          <Pay>
            <PayWord $size={28} $ls={-1} $italic>VISA</PayWord>
            <svg width="36" height="26" viewBox="0 0 36 26"><circle cx="13" cy="13" r="13" fill="#7e7e7e" /><circle cx="23" cy="13" r="13" fill="#b0b0b0" fillOpacity="0.85" /></svg>
            <PayWord $size={27} $ls={-0.5}>МИР</PayWord>
          </Pay>
          <Policy>Политика конфиденциальности</Policy>
        </FootBottom>
        <FootRule $mt={59} />
        <Legal>
          <span>Все ресурсы сайта www.biodivan.ru, включая (но не ограничиваясь) текстовую, графическую, фотографическую и видео информацию, структуру, дизайн</span>
          <span>и оформление страниц, товарные знаки, доменное имя, фирменное наименование являются объектами авторского права и прав на интеллектуальную</span>
          <span>собственность, защищены российским законодательством и международными соглашениями об охране авторских прав и интеллектуальной собственности.</span>
        </Legal>
      </Footer>
    </>
  );
}
